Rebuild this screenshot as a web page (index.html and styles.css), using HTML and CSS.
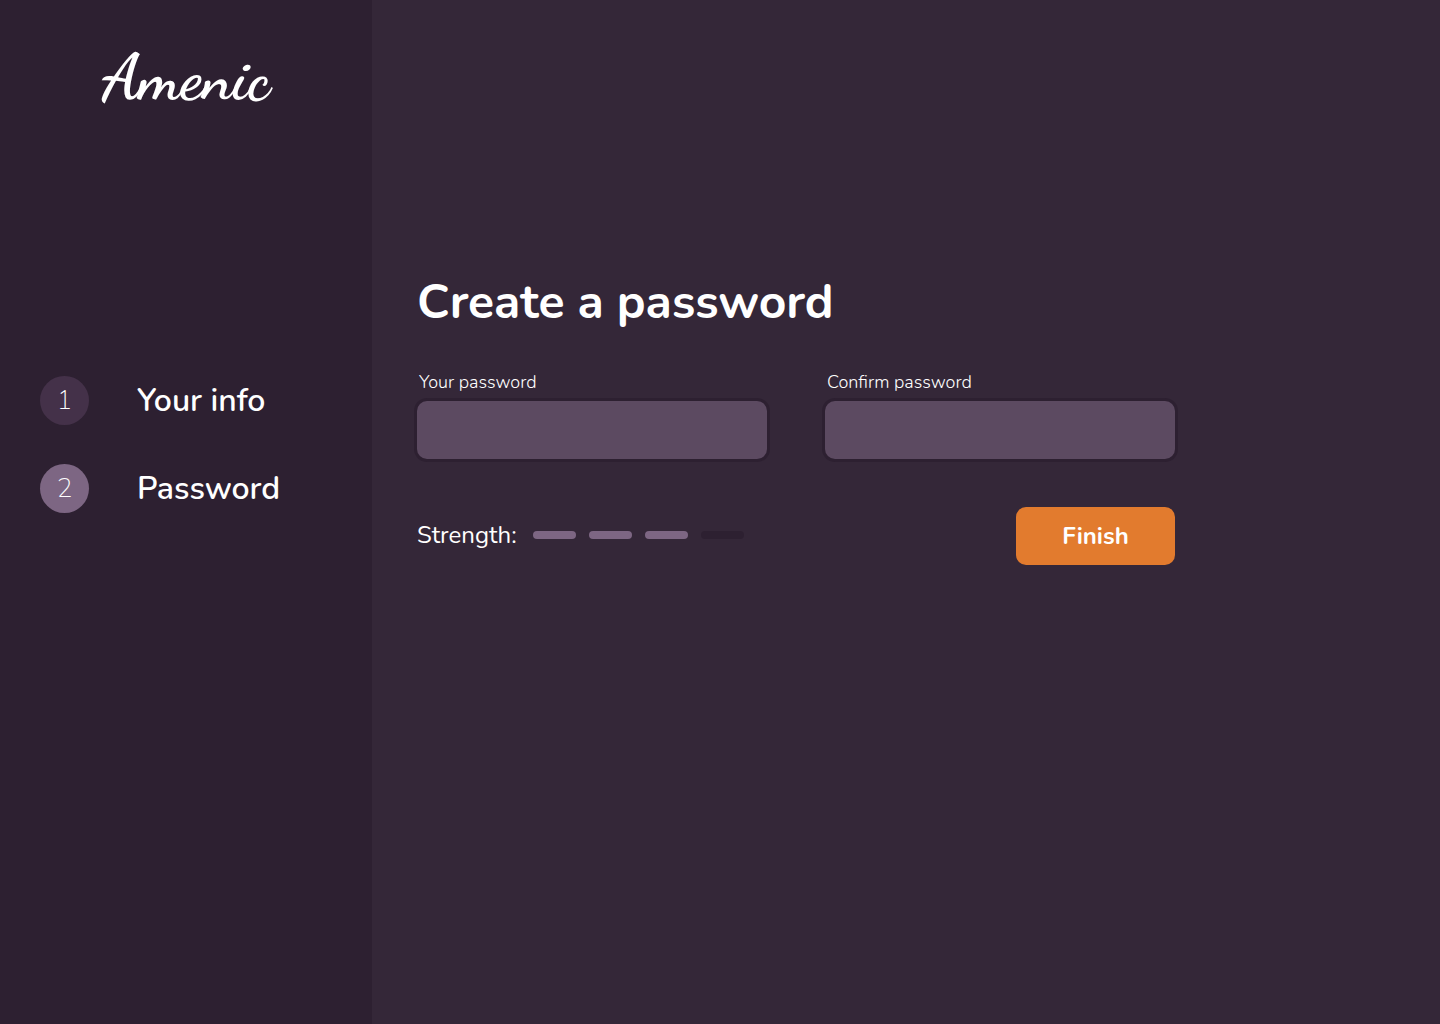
FILE: index.html
```html
<!DOCTYPE html>
<html lang="en">
<head>
  <meta charset="utf-8">
  <meta name="viewport" content="width=device-width, initial-scale=1">
  <title>Amenic – Create a password</title>
  <link rel="stylesheet" href="styles.css">
</head>
<body>
  <div class="page">
    <aside class="sidebar">
      <div class="logo">Amenic</div>
      <ol class="steps">
        <li class="step">
          <span class="step-number">1</span>
          <span class="step-name">Your info</span>
        </li>
        <li class="step" aria-current="step">
          <span class="step-number step-number-current">2</span>
          <span class="step-name">Password</span>
        </li>
      </ol>
    </aside>
    <main class="content">
      <form class="form">
        <h1 class="title">Create a password</h1>
        <div class="fields">
          <div class="field">
            <label class="field-label" for="password">Your password</label>
            <input class="field-input" id="password" type="password">
          </div>
          <div class="field">
            <label class="field-label" for="confirm">Confirm password</label>
            <input class="field-input" id="confirm" type="password">
          </div>
        </div>
        <div class="actions">
          <div class="strength">
            <span class="strength-label">Strength:</span>
            <div class="strength-bars">
              <span class="bar bar-on"></span>
              <span class="bar bar-on"></span>
              <span class="bar bar-on"></span>
              <span class="bar"></span>
            </div>
          </div>
          <button class="finish" type="button">Finish</button>
        </div>
      </form>
    </main>
  </div>
</body>
</html>
```
FILE: styles.css
```css
* {
  box-sizing: border-box;
}

body {
  margin: 0;
  background: #342738;
  color: #fff;
  font-family: Nunito, Lato, sans-serif;
}

.page {
  display: grid;
  grid-template-columns: 372px 1fr;
  min-height: 100vh;
}

.sidebar {
  padding: 40px;
  background: #2d2031;
}

.logo {
  font-family: "Dancing Script", "Liberation Serif", serif;
  font-size: 64px;
  font-weight: 700;
  line-height: 76px;
  text-align: center;
  text-rendering: geometricPrecision;
}

.steps {
  display: grid;
  gap: 39px;
  margin: 260px 0 0;
  padding: 0;
  list-style: none;
}

.step {
  display: flex;
  align-items: center;
  gap: 48px;
}

.step-number {
  width: 49px;
  height: 49px;
  border-radius: 50%;
  background: #443149;
  font-size: 26px;
  font-weight: 200;
  line-height: 49px;
  text-align: center;
}

.step-number-current {
  background: #7d6683;
}

.step-name {
  font-size: 32px;
  font-weight: 600;
  line-height: 48px;
}

.content {
  padding: 270px 45px 40px;
}

.form {
  max-width: 758px;
}

.title {
  margin: 0;
  font-size: 48px;
  font-weight: 700;
  line-height: 64px;
}

.fields {
  display: grid;
  grid-template-columns: 1fr 1fr;
  gap: 58px;
  margin-top: 36px;
}

.field {
  display: grid;
  gap: 7px;
}

.field-label {
  padding-left: 2px;
  font-size: 18px;
  font-weight: 300;
  line-height: 24px;
}

.field-input {
  width: 100%;
  height: 58px;
  padding: 0 16px;
  border: 0;
  border-radius: 10px;
  background: #5c4a61;
  box-shadow: 0 0 0 3px #2d2031;
  color: inherit;
  font: inherit;
  font-size: 24px;
}

.actions {
  display: flex;
  align-items: center;
  justify-content: space-between;
  margin-top: 48px;
}

.strength {
  display: flex;
  align-items: center;
  gap: 16px;
  padding-bottom: 2px;
}

.strength-label {
  font-size: 24px;
  line-height: 32px;
}

.strength-bars {
  display: flex;
  gap: 13px;
}

.bar {
  width: 43px;
  height: 8px;
  border-radius: 4px;
  background: #2d2031;
}

.bar-on {
  background: #7d6683;
}

.finish {
  width: 159px;
  height: 58px;
  border: 0;
  border-radius: 10px;
  background: #e27b2e;
  color: inherit;
  font: inherit;
  font-size: 24px;
  font-weight: 700;
}
```
